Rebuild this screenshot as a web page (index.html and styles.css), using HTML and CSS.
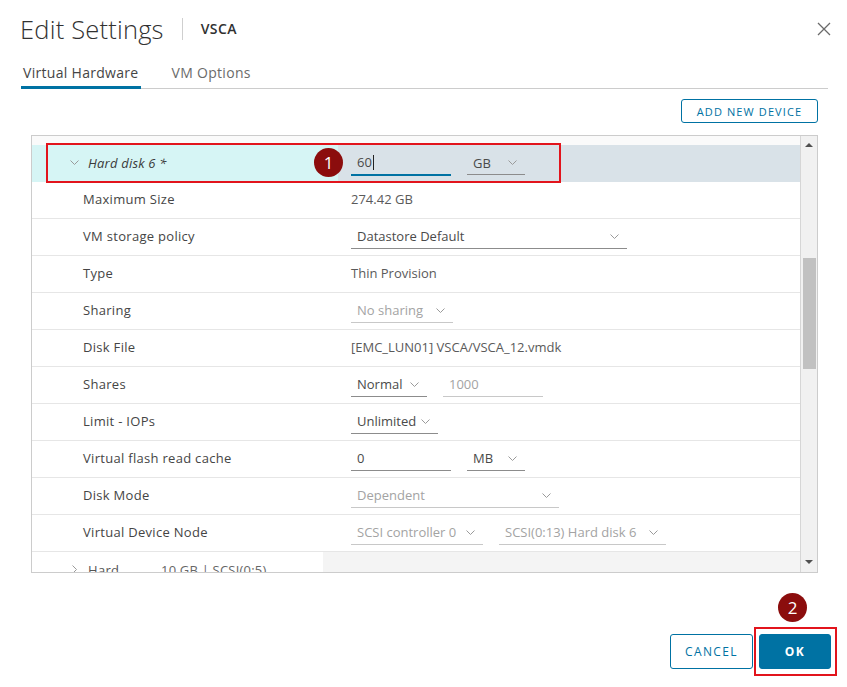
FILE: index.html
```html
<!DOCTYPE html>
<html lang="en">
<head>
<meta charset="utf-8">
<title>Edit Settings</title>
<link rel="stylesheet" href="styles.css">
</head>
<body>
<div class="dialog">
  <header class="hdr">
    <div class="title-wrap">
      <h1 class="title">Edit Settings</h1>
      <span class="sep"></span>
      <span class="vm">VSCA</span>
    </div>
    <button class="close" aria-label="Close">
      <svg width="14" height="14" viewBox="0 0 14 14"><path d="M1 1 L13 13 M13 1 L1 13" stroke="#6a6a6a" stroke-width="1.3" fill="none"/></svg>
    </button>
  </header>

  <nav class="tabs">
    <span class="tab active">Virtual Hardware</span>
    <span class="tab">VM Options</span>
  </nav>

  <div class="toolbar">
    <button class="btn-outline small">ADD NEW DEVICE</button>
  </div>

  <div class="table">
    <div class="rows">
      <div class="row partial"></div>

      <div class="row head">
        <span class="caret"><svg width="9" height="5" viewBox="0 0 9 5"><polyline points="0.5,0.5 4.5,4.5 8.5,0.5" fill="none" stroke="#9a9a9a" stroke-width="1"/></svg></span>
        <span class="head-label">Hard disk 6 *</span>
        <div class="value">
          <span class="ctl input focus w100">60<span class="cursor"></span></span>
          <span class="ctl select w58">GB<svg class="chev" width="9" height="5" viewBox="0 0 9 5"><polyline points="0.5,0.5 4.5,4.5 8.5,0.5" fill="none" stroke="#9a9a9a"/></svg></span>
        </div>
        <span class="redbox redbox-1"></span>
        <span class="badge badge-1">1</span>
      </div>

      <div class="row">
        <span class="label">Maximum Size</span>
        <div class="value"><span class="text">274.42 GB</span></div>
      </div>

      <div class="row">
        <span class="label">VM storage policy</span>
        <div class="value">
          <span class="ctl select w276">Datastore Default<svg class="chev" width="9" height="5" viewBox="0 0 9 5"><polyline points="0.5,0.5 4.5,4.5 8.5,0.5" fill="none" stroke="#9a9a9a"/></svg></span>
        </div>
      </div>

      <div class="row">
        <span class="label">Type</span>
        <div class="value"><span class="text">Thin Provision</span></div>
      </div>

      <div class="row">
        <span class="label">Sharing</span>
        <div class="value">
          <span class="ctl select disabled w102">No sharing<svg class="chev" width="9" height="5" viewBox="0 0 9 5"><polyline points="0.5,0.5 4.5,4.5 8.5,0.5" fill="none" stroke="#9a9a9a"/></svg></span>
        </div>
      </div>

      <div class="row">
        <span class="label">Disk File</span>
        <div class="value"><span class="text">[EMC_LUN01] VSCA/VSCA_12.vmdk</span></div>
      </div>

      <div class="row">
        <span class="label">Shares</span>
        <div class="value">
          <span class="ctl select w76">Normal<svg class="chev" width="9" height="5" viewBox="0 0 9 5"><polyline points="0.5,0.5 4.5,4.5 8.5,0.5" fill="none" stroke="#9a9a9a"/></svg></span>
          <span class="ctl input disabled w100">1000</span>
        </div>
      </div>

      <div class="row">
        <span class="label">Limit - IOPs</span>
        <div class="value">
          <span class="ctl select w87">Unlimited<svg class="chev" width="9" height="5" viewBox="0 0 9 5"><polyline points="0.5,0.5 4.5,4.5 8.5,0.5" fill="none" stroke="#9a9a9a"/></svg></span>
        </div>
      </div>

      <div class="row">
        <span class="label">Virtual flash read cache</span>
        <div class="value">
          <span class="ctl input w100">0</span>
          <span class="ctl select w58">MB<svg class="chev" width="9" height="5" viewBox="0 0 9 5"><polyline points="0.5,0.5 4.5,4.5 8.5,0.5" fill="none" stroke="#9a9a9a"/></svg></span>
        </div>
      </div>

      <div class="row">
        <span class="label">Disk Mode</span>
        <div class="value">
          <span class="ctl select disabled w208">Dependent<svg class="chev" width="9" height="5" viewBox="0 0 9 5"><polyline points="0.5,0.5 4.5,4.5 8.5,0.5" fill="none" stroke="#9a9a9a"/></svg></span>
        </div>
      </div>

      <div class="row">
        <span class="label">Virtual Device Node</span>
        <div class="value">
          <span class="ctl select disabled w132">SCSI controller 0<svg class="chev" width="9" height="5" viewBox="0 0 9 5"><polyline points="0.5,0.5 4.5,4.5 8.5,0.5" fill="none" stroke="#9a9a9a"/></svg></span>
          <span class="ctl select disabled w167">SCSI(0:13) Hard disk 6<svg class="chev" width="9" height="5" viewBox="0 0 9 5"><polyline points="0.5,0.5 4.5,4.5 8.5,0.5" fill="none" stroke="#9a9a9a"/></svg></span>
        </div>
      </div>

      <div class="row next">
        <span class="caret right"><svg width="5" height="9" viewBox="0 0 5 9"><polyline points="0.5,0.5 4.5,4.5 0.5,8.5" fill="none" stroke="#9a9a9a" stroke-width="1"/></svg></span>
        <span class="next-label">Hard</span>
        <span class="next-summary">10 GB | SCSI(0:5)</span>
      </div>
    </div>

    <div class="scrollbar">
      <span class="arrow up"></span>
      <span class="thumb"></span>
      <span class="arrow down"></span>
    </div>
  </div>

  <footer class="footer">
    <button class="btn-outline big">CANCEL</button>
    <button class="btn-primary big">OK
      <span class="redbox redbox-2"></span>
      <span class="badge badge-2">2</span>
    </button>
  </footer>
</div>
</body>
</html>
```

FILE: styles.css
```css
* { box-sizing: border-box; }

html, body {
  margin: 0;
  padding: 0;
  background: #fff;
}

body {
  width: 847px;
  height: 687px;
  overflow: hidden;
  font-family: "Open Sans", "Noto Sans", sans-serif;
  color: #454545;
}

.dialog {
  display: flex;
  flex-direction: column;
  height: 687px;
}

/* header */
.hdr {
  height: 56px;
  display: flex;
  align-items: center;
  justify-content: space-between;
  padding: 1px 16px 0 20px;
}

.title-wrap {
  display: flex;
  align-items: center;
}

.title {
  margin: 0;
  font-size: 25.5px;
  font-weight: 300;
  line-height: 30px;
  color: #313131;
  letter-spacing: 0.2px;
}

.sep {
  width: 1px;
  height: 22px;
  background: #cfcfcf;
  margin: 0 18px 0 18px;
}

.vm {
  font-size: 14px;
  font-weight: 600;
  color: #313131;
  letter-spacing: 0.4px;
}

.close {
  border: 0;
  background: none;
  padding: 0;
  width: 14px;
  height: 14px;
  display: flex;
}

/* tabs */
.tabs {
  margin: 0 19px 0 21px;
  height: 33px;
  border-bottom: 1px solid #cccccc;
  display: flex;
  gap: 29px;
}

.tab {
  height: 33px;
  margin-bottom: -1px;
  padding: 0 2px;
  display: flex;
  align-items: center;
  font-size: 14px;
  letter-spacing: 0.3px;
  color: #6b6b6b;
}

.tab.active {
  color: #454545;
  box-shadow: inset 0 -3px 0 #0072a3;
}

/* toolbar */
.toolbar {
  display: flex;
  justify-content: flex-end;
  padding-right: 29px;
  margin-top: 10px;
}

.btn-outline, .btn-primary {
  font-family: "Open Sans", "Noto Sans", sans-serif;
  border-radius: 3px;
  cursor: pointer;
}

.btn-outline {
  background: #fff;
  border: 1px solid #0072a3;
  color: #0072a3;
}

.btn-outline.small {
  width: 137px;
  height: 24px;
  font-size: 11px;
  letter-spacing: 1.1px;
  padding: 0;
}

/* table */
.table {
  margin: 12px 0 0 31px;
  width: 787px;
  height: 438px;
  border: 1px solid #cccccc;
  display: flex;
  overflow: hidden;
}

.rows {
  width: 768px;
  height: 436px;
  overflow: hidden;
  display: flex;
  flex-direction: column;
}

.row {
  flex: none;
  height: 37px;
  border-bottom: 1px solid #e6e6e6;
  display: flex;
  align-items: center;
  padding-bottom: 2px;
  font-size: 13px;
  position: relative;
}

.row.partial {
  height: 9px;
  padding: 0;
  border-bottom: 0;
  background: #fafafa;
}

.row.head {
  height: 37px;
  border-bottom: 0;
  background: linear-gradient(to right, #d6f5f5 306px, #d9e2e8 306px);
}

.row.next {
  border-bottom: 0;
  background: linear-gradient(to right, #ffffff 291px, #f4f4f4 291px);
  align-items: flex-start;
  padding-top: 9px;
}

.label {
  width: 319px;
  padding-left: 51px;
  color: #454545;
  letter-spacing: 0.3px;
}

.caret {
  width: 56px;
  padding-left: 38px;
  display: flex;
}

.caret.right {
  padding-left: 40px;
  padding-top: 4px;
}

.head-label {
  width: 263px;
  font-style: italic;
  color: #3a3a3a;
  letter-spacing: 0.2px;
}

.next-label {
  width: 73px;
  color: #555;
  letter-spacing: 0.3px;
}

.next-summary {
  color: #666;
  letter-spacing: 0.2px;
}

.value {
  display: flex;
  align-items: center;
  gap: 16px;
}

.text {
  color: #5a5a5a;
}

.ctl {
  height: 24px;
  margin-top: 1px;
  border-bottom: 1px solid #8c8c8c;
  padding: 0 8px 0 6px;
  display: flex;
  align-items: center;
  justify-content: space-between;
  color: #4a4a4a;
  position: relative;
}

.ctl.focus {
  border-bottom: 2px solid #0072a3;
  height: 25px;
  margin-top: 1px;
  justify-content: flex-start;
}

.ctl.input { justify-content: flex-start; }

.ctl.disabled {
  color: #a3a3a3;
  border-bottom-color: #c8c8c8;
}

.cursor {
  display: inline-block;
  width: 1px;
  height: 15px;
  background: #222;
  margin-left: 1px;
}

.chev { flex: none; }

.w58 { width: 58px; }
.w76 { width: 76px; }
.w87 { width: 87px; }
.w100 { width: 100px; }
.w102 { width: 102px; }
.w132 { width: 132px; }
.w167 { width: 167px; }
.w208 { width: 208px; }
.w276 { width: 276px; }

/* scrollbar */
.scrollbar {
  width: 17px;
  height: 436px;
  background: #f1f1f1;
  border-left: 1px solid #d6d6d6;
  display: flex;
  flex-direction: column;
  align-items: center;
}

.arrow {
  width: 0;
  height: 0;
  border-left: 4px solid transparent;
  border-right: 4px solid transparent;
}

.arrow.up {
  border-bottom: 4px solid #505050;
  margin-top: 7px;
}

.arrow.down {
  border-top: 4px solid #505050;
  margin-top: auto;
  margin-bottom: 8px;
}

.thumb {
  width: 13px;
  height: 111px;
  background: #c1c1c1;
  margin-top: 111px;
}

/* annotations */
.redbox {
  position: absolute;
  border: 2px solid #e2141c;
  pointer-events: none;
}

.redbox-1 {
  left: 14px;
  top: -2px;
  width: 515px;
  height: 40px;
}

.badge {
  position: absolute;
  width: 29px;
  height: 29px;
  border-radius: 50%;
  background: #8b0d0d;
  color: #fff;
  font-family: "Open Sans", "Noto Sans", sans-serif;
  font-size: 17px;
  font-weight: 400;
  font-style: normal;
  letter-spacing: 0;
  display: flex;
  align-items: center;
  justify-content: center;
}

.badge-1 {
  left: 282px;
  top: 3px;
}

/* footer */
.footer {
  margin-top: 61px;
  display: flex;
  justify-content: flex-end;
  gap: 6px;
  padding-right: 16px;
}

.btn-outline.big, .btn-primary.big {
  height: 35px;
  font-size: 12px;
  letter-spacing: 1.4px;
  padding: 0;
}

.btn-outline.big { width: 83px; }

.btn-primary {
  width: 72px;
  background: #0072a3;
  border: 1px solid #0072a3;
  color: #fff;
  font-weight: 700;
  position: relative;
}

.redbox-2 {
  left: -6px;
  top: -8px;
  width: 83px;
  height: 49px;
}

.badge-2 {
  left: 18px;
  top: -42px;
}
```
